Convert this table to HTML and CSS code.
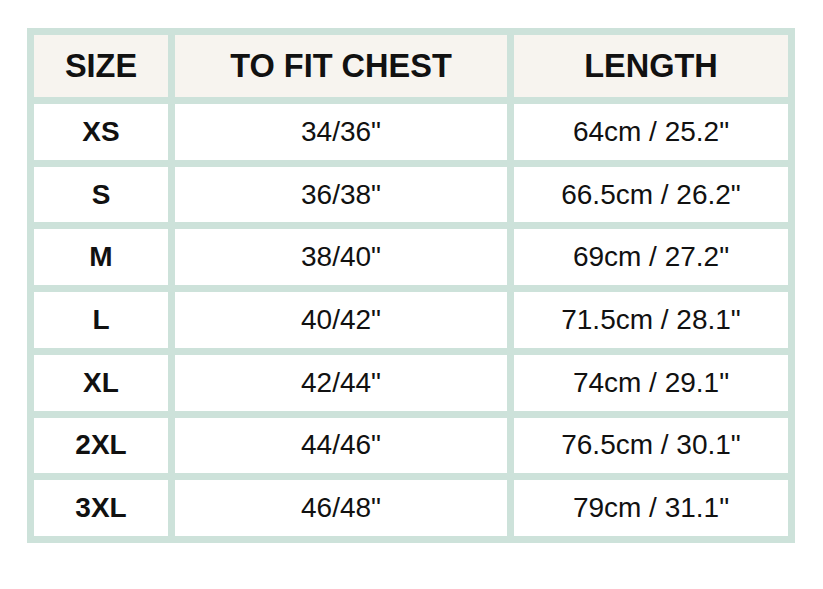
FILE: index.html
```html
<!DOCTYPE html>
<html>
<head>
<meta charset="utf-8">
<link rel="stylesheet" href="styles.css">
</head>
<body>
<div class="chart">
  <div class="cell head">SIZE</div>
  <div class="cell head">TO FIT CHEST</div>
  <div class="cell head">LENGTH</div>

  <div class="cell size">XS</div>
  <div class="cell">34/36"</div>
  <div class="cell">64cm / 25.2"</div>

  <div class="cell size">S</div>
  <div class="cell">36/38"</div>
  <div class="cell">66.5cm / 26.2"</div>

  <div class="cell size">M</div>
  <div class="cell">38/40"</div>
  <div class="cell">69cm / 27.2"</div>

  <div class="cell size">L</div>
  <div class="cell">40/42"</div>
  <div class="cell">71.5cm / 28.1"</div>

  <div class="cell size">XL</div>
  <div class="cell">42/44"</div>
  <div class="cell">74cm / 29.1"</div>

  <div class="cell size">2XL</div>
  <div class="cell">44/46"</div>
  <div class="cell">76.5cm / 30.1"</div>

  <div class="cell size">3XL</div>
  <div class="cell">46/48"</div>
  <div class="cell">79cm / 31.1"</div>
</div>
</body>
</html>
```

FILE: styles.css
```css
html, body {
  margin: 0;
  padding: 0;
  background: #ffffff;
}

body {
  font-family: "Liberation Sans", Arial, Helvetica, sans-serif;
  color: #111111;
}

.chart {
  margin: 28px 0 0 27px;
  width: 768px;
  height: 515px;
  box-sizing: border-box;
  display: grid;
  grid-template-columns: 134px 332px 274px;
  grid-template-rows: 62px repeat(7, 1fr);
  gap: 7px;
  padding: 7px;
  background: #cde2da;
}

.cell {
  background: #ffffff;
  display: flex;
  align-items: center;
  justify-content: center;
  font-size: 28px;
  line-height: 1;
}

.head {
  background: #f7f4ef;
  font-weight: bold;
  font-size: 32.5px;
}

.size {
  font-weight: bold;
}
```
